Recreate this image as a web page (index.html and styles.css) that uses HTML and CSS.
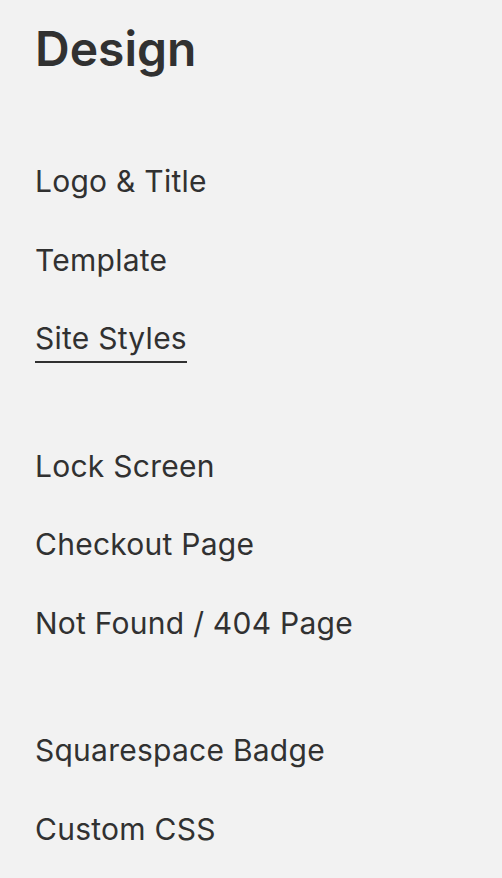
FILE: index.html
```html
<!DOCTYPE html>
<html lang="en">
<head>
<meta charset="utf-8">
<title>Design</title>
<link rel="stylesheet" href="styles.css">
</head>
<body>
<main class="panel">
  <h1 class="title">Design</h1>
  <nav class="groups">
    <ul class="group">
      <li class="item"><span class="label">Logo &amp; Title</span></li>
      <li class="item"><span class="label">Template</span></li>
      <li class="item"><span class="label active">Site Styles</span></li>
    </ul>
    <ul class="group">
      <li class="item"><span class="label">Lock Screen</span></li>
      <li class="item"><span class="label">Checkout Page</span></li>
      <li class="item"><span class="label">Not Found / 404 Page</span></li>
    </ul>
    <ul class="group">
      <li class="item"><span class="label">Squarespace Badge</span></li>
      <li class="item"><span class="label">Custom CSS</span></li>
    </ul>
  </nav>
</main>
</body>
</html>
```

FILE: styles.css
```css
html, body {
  margin: 0;
  padding: 0;
  background: #f2f2f2;
}
body {
  font-family: Inter, "Noto Sans", "Liberation Sans", sans-serif;
  color: #313131;
}
.panel {
  padding: 20px 0 0 35px;
}
.title {
  margin: 0;
  font-size: 48px;
  line-height: 58px;
  font-weight: 600;
  letter-spacing: 0;
}
.groups {
  display: flex;
  flex-direction: column;
  gap: 49px;
  margin-top: 64px;
}
.group {
  list-style: none;
  margin: 0;
  padding: 0;
}
.item {
  padding: 21.25px 0;
  font-size: 30px;
  line-height: 36px;
  font-weight: 400;
  letter-spacing: 0.25px;
}
.label.active {
  padding-bottom: 5px;
  border-bottom: 2px solid #313131;
}
```
